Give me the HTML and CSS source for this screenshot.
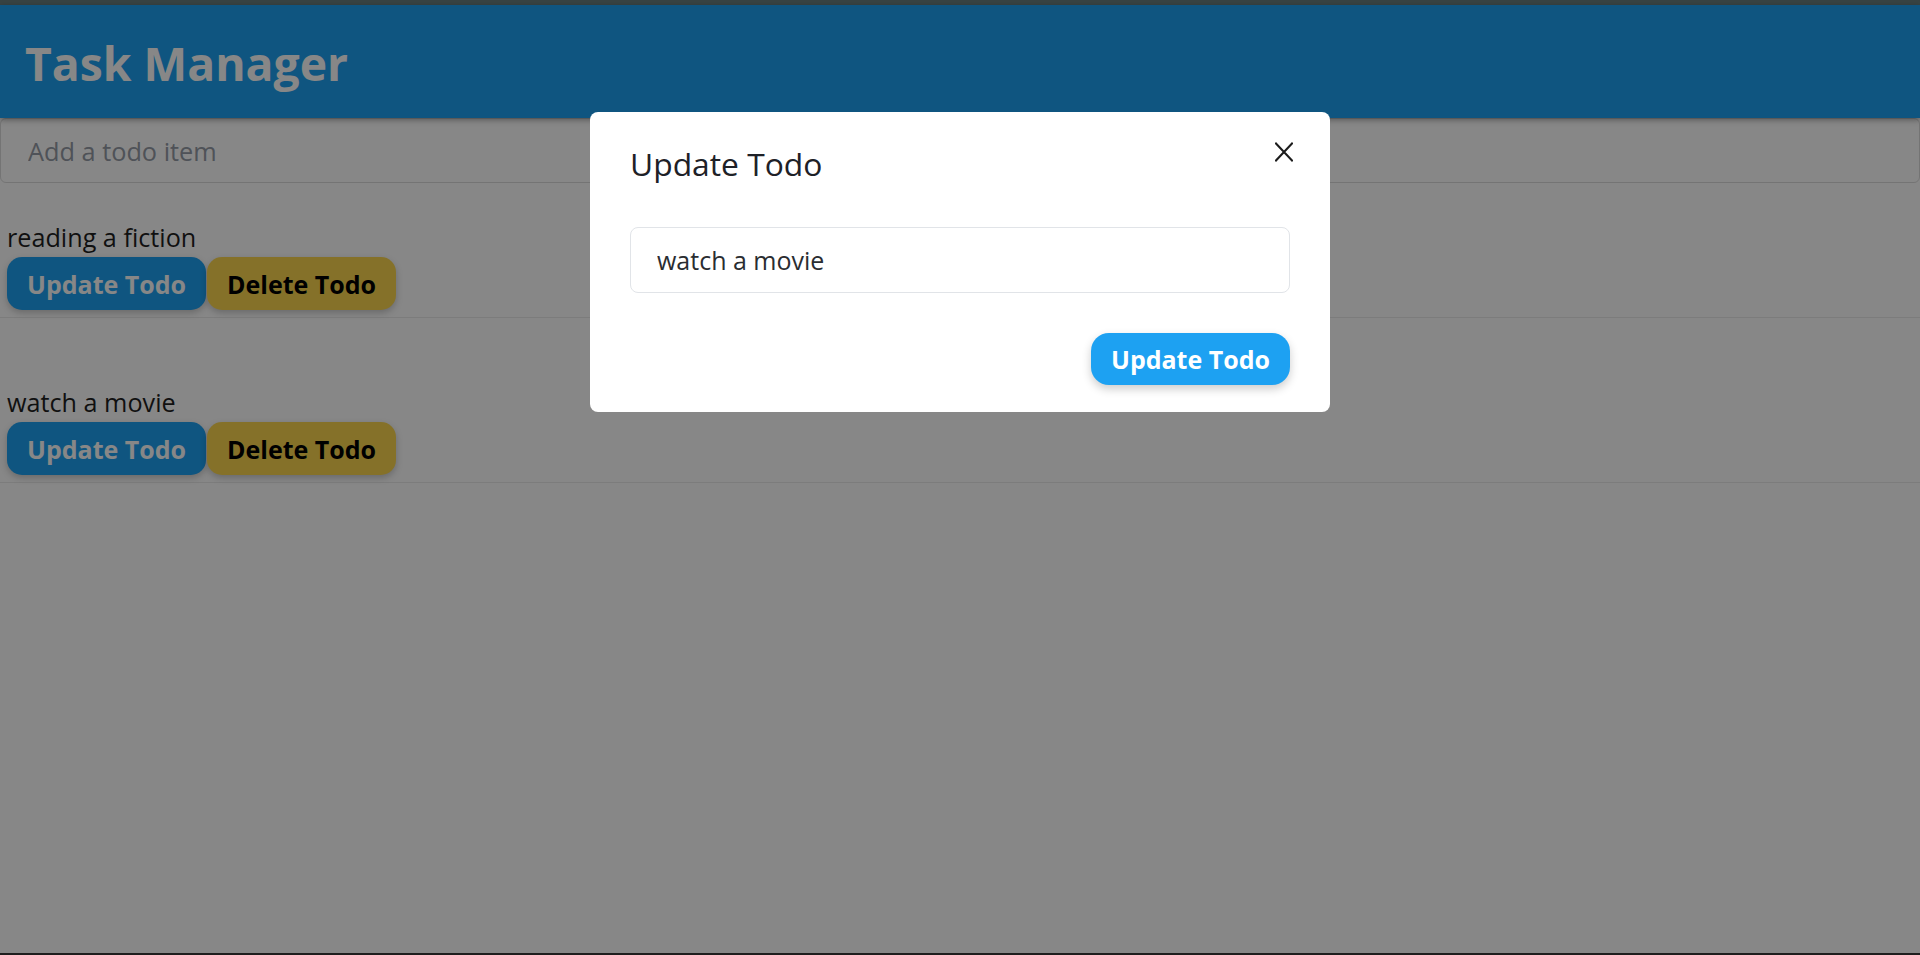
FILE: index.html
```html
<!DOCTYPE html>
<html lang="en">
<head>
<meta charset="utf-8">
<title>Task Manager</title>
<link rel="stylesheet" href="styles.css">
</head>
<body>
<div class="frame-top"></div>
<div class="app">
  <header class="header">
    <h1 class="brand">Task Manager</h1>
  </header>
  <input class="add-input" type="text" placeholder="Add a todo item">
  <ul class="todo-list">
    <li class="todo">
      <p class="todo-text">reading a fiction</p>
      <div class="actions">
        <button class="btn btn-update">Update Todo</button>
        <button class="btn btn-delete">Delete Todo</button>
      </div>
    </li>
    <li class="todo">
      <p class="todo-text">watch a movie</p>
      <div class="actions">
        <button class="btn btn-update">Update Todo</button>
        <button class="btn btn-delete">Delete Todo</button>
      </div>
    </li>
  </ul>
</div>
<div class="frame-bottom"></div>

<div class="backdrop">
  <div class="modal">
    <div class="modal-header">
      <h2 class="modal-title">Update Todo</h2>
      <button class="close-btn" aria-label="Close">
        <svg width="18" height="20" viewBox="0 0 18 20" fill="none" stroke="#1c1c1c" stroke-width="2" stroke-linecap="square"><path d="M1 1.5 L17 18.5 M17 1.5 L1 18.5"/></svg>
      </button>
    </div>
    <input class="modal-input" type="text" value="watch a movie">
    <div class="modal-footer">
      <button class="btn btn-primary">Update Todo</button>
    </div>
  </div>
</div>
</body>
</html>
```

FILE: styles.css
```css
* { box-sizing: border-box; }

html, body {
  margin: 0;
  padding: 0;
}

body {
  min-height: 100vh;
  display: flex;
  flex-direction: column;
  background: #ffffff;
  font-family: "Open Sans", "Noto Sans", sans-serif;
  color: #212529;
}

.frame-top {
  height: 5px;
  background: #6a7f7f;
}

.frame-bottom {
  height: 2px;
  background: #393939;
}

.app {
  flex: 1;
}

.header {
  position: relative;
  z-index: 1;
  height: 113px;
  background: #1da1f2;
  box-shadow: 0 2px 6px rgba(0, 0, 0, 0.35);
  display: flex;
  align-items: center;
  padding: 4px 0 0 25px;
}

.brand {
  margin: 0;
  font-size: 46.3px;
  line-height: 1.2;
  font-weight: 700;
  color: #ffffff;
}

.add-input {
  display: block;
  width: 100%;
  height: 65px;
  margin: 0;
  padding: 0 27px;
  border: 1px solid #dcdcdc;
  border-radius: 6px;
  font-family: inherit;
  font-size: 25.3px;
  color: #212529;
  background: #fff;
}

.add-input::placeholder {
  color: #959ca6;
}

.todo-list {
  list-style: none;
  margin: 0;
  padding: 0;
}

.todo {
  padding: 35px 7px 7px;
  border-bottom: 1px solid #ebebeb;
}

.todo + .todo {
  margin-top: 30px;
}

.todo-text {
  margin: 0;
  font-size: 25.2px;
  line-height: 39px;
  color: #1f1f1f;
}

.actions {
  display: flex;
  gap: 1px;
}

.btn {
  height: 53px;
  padding: 0 20px;
  border: none;
  border-radius: 15px;
  font-family: inherit;
  font-size: 25px;
  font-weight: 700;
  cursor: pointer;
  box-shadow: 0 3px 7px rgba(0, 0, 0, 0.22);
}

.btn-update {
  background: #1da1f2;
  color: #ffffff;
}

.btn-delete {
  background: #fbd64f;
  color: #000000;
}

/* Modal */
.backdrop {
  position: fixed;
  inset: 0;
  z-index: 10;
  background: rgba(0, 0, 0, 0.47);
  display: flex;
  justify-content: center;
  align-items: flex-start;
  padding-top: 112px;
}

.modal {
  width: 740px;
  background: #ffffff;
  border-radius: 8px;
  padding: 34px 40px 27px;
}

.modal-header {
  display: flex;
  justify-content: space-between;
  align-items: flex-start;
  margin-bottom: 45px;
}

.modal-title {
  margin: 0;
  font-size: 31.8px;
  line-height: 36px;
  font-weight: 500;
  color: #1e2127;
}

.close-btn {
  margin: -4px -3px 0 0;
  padding: 0;
  border: none;
  background: none;
  line-height: 0;
  cursor: pointer;
}

.modal-input {
  display: block;
  width: 100%;
  height: 66px;
  margin: 0;
  padding: 0 26px;
  border: 1px solid #e1e4e8;
  border-radius: 8px;
  font-family: inherit;
  font-size: 25px;
  color: #2a2d31;
  background: #fff;
}

.modal-footer {
  display: flex;
  justify-content: flex-end;
  margin-top: 40px;
}

.btn-primary {
  height: 52px;
  border-radius: 18px;
  background: #1da1f2;
  color: #ffffff;
  box-shadow: 0 4px 10px rgba(0, 0, 0, 0.2);
}
```
